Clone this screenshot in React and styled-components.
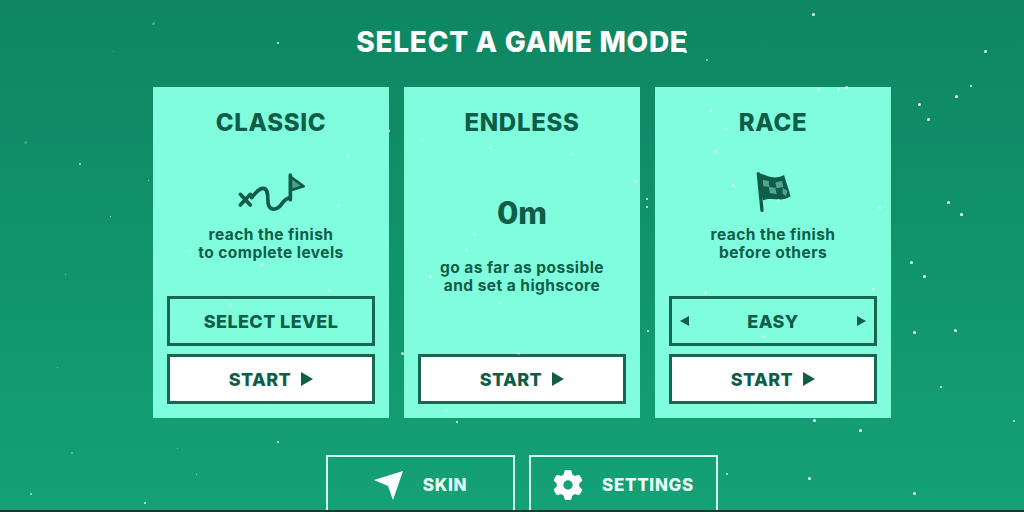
import React from 'react';
import styled, { createGlobalStyle } from 'styled-components';
import { FaGear } from 'react-icons/fa6';

const INK = '#0f5c48';
const MINT = '#7ffddd';

const STARS = [
    [278, 43, 2, 0.9], [153, 23, 3, 0.25], [113, 51, 1, 0.3], [80, 164, 2, 0.7], [148, 180, 1, 0.7], [110, 216, 1, 0.8],
    [25, 142, 3, 0.2], [65, 274, 1, 0.5], [57, 367, 1, 0.4], [72, 453, 2, 0.4], [177, 448, 1, 0.5], [196, 474, 1, 0.6],
    [31, 494, 2, 0.7], [145, 503, 2, 0.8], [278, 442, 2, 0.9], [583, 50, 2, 0.9], [813, 14, 3, 0.9], [685, 34, 3, 1],
    [685, 51, 3, 1], [707, 60, 2, 0.6], [985, 51, 3, 0.9], [971, 86, 2, 0.9], [956, 96, 3, 0.9], [919, 104, 3, 0.9],
    [928, 119, 3, 0.9], [948, 202, 3, 0.9], [961, 214, 3, 1], [818, 89, 3, 0.6], [838, 89, 3, 0.6], [846, 87, 3, 0.8],
    [710, 110, 3, 0.6], [726, 128, 3, 0.6], [715, 151, 3, 0.6], [733, 185, 3, 0.7], [778, 200, 3, 0.6], [879, 207, 3, 0.7],
    [911, 262, 3, 0.9], [924, 276, 3, 0.9], [914, 332, 3, 0.9], [955, 330, 3, 0.9], [941, 387, 2, 0.8], [1014, 421, 2, 0.8],
    [814, 420, 3, 0.9], [860, 430, 3, 0.9], [727, 474, 2, 0.8], [809, 478, 3, 0.9], [914, 493, 3, 0.9], [705, 292, 3, 0.6],
    [873, 289, 3, 0.6], [763, 336, 3, 0.6], [423, 140, 2, 0.5], [490, 147, 3, 0.5], [572, 153, 3, 0.5], [635, 181, 3, 0.6],
    [647, 199, 2, 0.9], [647, 207, 2, 0.9], [474, 234, 3, 0.5], [466, 249, 3, 0.5], [506, 245, 2, 0.4], [430, 276, 3, 0.6],
    [500, 303, 3, 0.5], [648, 331, 2, 0.9], [402, 353, 3, 0.7], [518, 353, 3, 0.4], [446, 410, 2, 0.5], [457, 422, 2, 0.9],
    [389, 131, 2, 0.8], [348, 156, 3, 0.5], [261, 174, 2, 0.3], [338, 205, 3, 0.5], [190, 250, 3, 0.3], [261, 264, 3, 0.5],
    [329, 290, 3, 0.6], [229, 304, 3, 0.4],
];

const GlobalStyle = createGlobalStyle`
    html, body {
        margin: 0;
        padding: 0;
    }
`;

const Page = styled.div`
    position: relative;
    width: 1024px;
    height: 512px;
    box-sizing: border-box;
    padding-left: 20px;
    overflow: hidden;
    display: flex;
    flex-direction: column;
    align-items: center;
    background: linear-gradient(180deg, #0e8662 0%, #11936c 50%, #15a176 100%);
    font-family: Inter, "Liberation Sans", sans-serif;
    font-weight: 700;
`;

const PageTitle = styled.h1`
    flex: none;
    margin: 0;
    height: 87px;
    padding-top: 26px;
    box-sizing: border-box;
    font-size: 28px;
    line-height: 33px;
    font-weight: 800;
    letter-spacing: 0.7px;
    color: #fff;
`;

const Cards = styled.div`
    flex: none;
    display: flex;
    gap: 15px;
`;

const Card = styled.section`
    width: 236px;
    height: 331px;
    box-sizing: border-box;
    padding: 22px 14px 14px;
    display: flex;
    flex-direction: column;
    background: ${MINT};
    color: ${INK};
    text-align: center;
`;

const CardTitle = styled.h2`
    margin: 0;
    font-size: 24px;
    line-height: 28px;
    font-weight: 800;
    letter-spacing: 0.7px;
`;

const CardBody = styled.div`
    flex: 1;
    padding-bottom: ${(p) => p.$lift}px;
    display: flex;
    flex-direction: column;
    align-items: center;
    justify-content: center;
`;

const Visual = styled.div`
    height: ${(p) => p.$height}px;
    margin-bottom: ${(p) => p.$gap}px;
    display: flex;
    align-items: center;
    justify-content: center;
`;

const Distance = styled.div`
    font-size: 31px;
    line-height: 36px;
    font-weight: 800;
`;

const Description = styled.p`
    margin: 0;
    font-size: 15.5px;
    line-height: 18px;
    font-weight: 700;
    letter-spacing: 0.45px;
`;

const Actions = styled.div`
    display: flex;
    flex-direction: column;
    gap: 8px;
`;

const ActionButton = styled.button`
    width: 100%;
    height: 50px;
    box-sizing: border-box;
    padding: 0 8px;
    display: flex;
    align-items: center;
    justify-content: ${(p) => (p.$spread ? 'space-between' : 'center')};
    gap: 10px;
    border: 3px solid #17664f;
    background: ${(p) => (p.$solid ? '#fff' : 'transparent')};
    color: ${INK};
    font: inherit;
    font-size: 18px;
    font-weight: 800;
    letter-spacing: 0.4px;
`;

const Triangle = styled.span`
    width: 0;
    height: 0;
    border-top: ${(p) => p.$size}px solid transparent;
    border-bottom: ${(p) => p.$size}px solid transparent;
    ${(p) => (p.$left ? 'border-right' : 'border-left')}: ${(p) => p.$size * 1.8}px solid ${INK};
`;

const Footer = styled.div`
    flex: none;
    display: flex;
    gap: 14px;
    margin-top: 37px;
`;

const FooterButton = styled.button`
    width: 189px;
    height: 64px;
    box-sizing: border-box;
    padding: 0 0 4px;
    display: flex;
    align-items: center;
    justify-content: center;
    gap: 19px;
    border: 2px solid #d8fff2;
    background: transparent;
    color: #e6fff7;
    font: inherit;
    font-size: 17px;
    font-weight: 800;
    letter-spacing: 0.7px;
`;

const BottomEdge = styled.div`
    position: absolute;
    left: 0;
    right: 0;
    bottom: 0;
    height: 2px;
    background: #0e3d3a;
`;

const Star = styled.i`
    position: absolute;
    border-radius: 50%;
    background: #fff;
    pointer-events: none;
`;

const RouteIcon = () => (
    <svg width="80" height="50" viewBox="0 0 240 150" fill="none" stroke={INK} strokeWidth="11" strokeLinecap="round" strokeLinejoin="round">
        <path d="M28 82 L58 114 M58 82 L28 114" />
        <path d="M62 92 C72 80 82 64 96 64 C116 64 108 100 112 112 C116 130 134 130 146 118 C154 110 160 94 178 92" />
        <path d="M178 24 V98" />
        <path d="M180 30 L218 58 L180 70 Z" fill="#4f9f8a" strokeWidth="8" />
    </svg>
);

const FlagIcon = () => (
    <svg width="55" height="50" viewBox="0 0 165 150">
        <path d="M37 20 L48 130" stroke={INK} strokeWidth="10" strokeLinecap="round" />
        <path d="M36 18 C60 22 78 42 114 24 L134 88 C104 108 82 88 50 100 Z" fill={INK} />
        <path d="M50 38 L68 42 L70 60 L52 58 Z M88 46 L108 42 L112 60 L92 64 Z M68 60 L88 62 L92 82 L72 78 Z M110 62 L124 72 L120 88 L110 80 Z" fill="#4fa68e" />
    </svg>
);

const PlaneIcon = () => (
    <svg width="30" height="30" viewBox="0 0 30 30">
        <path d="M29 1 L19 30 L14 16 L0 10 Z" fill="#fff" />
    </svg>
);

const StartButton = () => (
    <ActionButton $solid>
        START
        <Triangle $size={7} />
    </ActionButton>
);

const App = () => (
    <Page>
        <GlobalStyle />
        <PageTitle>SELECT A GAME MODE</PageTitle>
        <Cards>
            <Card>
                <CardTitle>CLASSIC</CardTitle>
                <CardBody $lift={4}>
                    <Visual $height={50} $gap={9}><RouteIcon /></Visual>
                    <Description>reach the finish<br />to complete levels</Description>
                </CardBody>
                <Actions>
                    <ActionButton>SELECT LEVEL</ActionButton>
                    <StartButton />
                </Actions>
            </Card>
            <Card>
                <CardTitle>ENDLESS</CardTitle>
                <CardBody $lift={2}>
                    <Visual $height={36} $gap={28}><Distance>0m</Distance></Visual>
                    <Description>go as far as possible<br />and set a highscore</Description>
                </CardBody>
                <Actions>
                    <StartButton />
                </Actions>
            </Card>
            <Card>
                <CardTitle>RACE</CardTitle>
                <CardBody $lift={4}>
                    <Visual $height={50} $gap={9}><FlagIcon /></Visual>
                    <Description>reach the finish<br />before others</Description>
                </CardBody>
                <Actions>
                    <ActionButton $spread>
                        <Triangle $left $size={5.5} />
                        EASY
                        <Triangle $size={5.5} />
                    </ActionButton>
                    <StartButton />
                </Actions>
            </Card>
        </Cards>
        <Footer>
            <FooterButton><PlaneIcon />SKIN</FooterButton>
            <FooterButton><FaGear size={30} color="#fff" />SETTINGS</FooterButton>
        </Footer>
        {STARS.map(([x, y, size, alpha]) => (
            <Star key={`${x}-${y}`} style={{ left: x - size / 2, top: y - size / 2, width: size, height: size, opacity: alpha }} />
        ))}
        <BottomEdge />
    </Page>
);

export default App;
